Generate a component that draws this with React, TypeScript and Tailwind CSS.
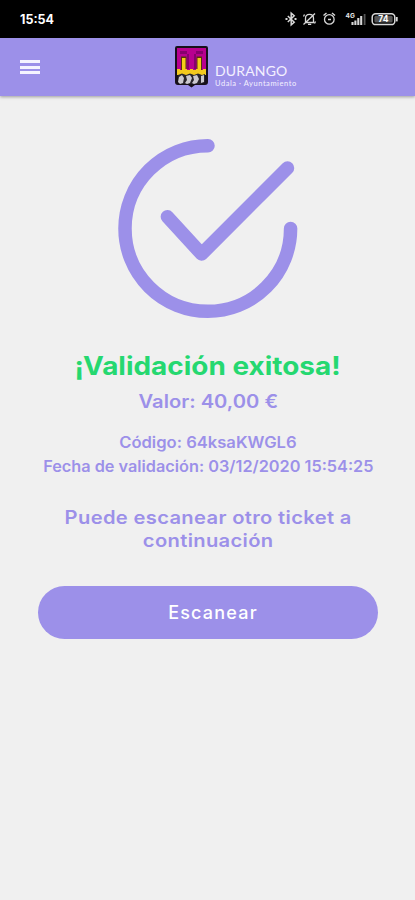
const StatusIcons = () => (
  <svg width="116" height="16" viewBox="284 11 116 16" fill="none" stroke="#d8d8d8" strokeWidth="1.300">
    {/* bluetooth */}
    <path d="M287.800 16l6.400 6.200-3 2.600V13.200l3 2.600-6.400 6.200" strokeWidth="1.500" />
    <path d="M285.500 19h2M294.500 19h2" strokeWidth="1.800" />
    {/* muted bell */}
    <path d="M305.500 22.500v-4.200c0-5.200 8-5.200 8 0v4.200zM308 24.400h3.200M303.500 24.500l11.500-11M303.500 16.500l1-2M315.500 21.500l-1 2" />
    {/* alarm */}
    <circle cx="329.300" cy="19.400" r="4.800" />
    <path d="M328 19.500h3M323.500 15.500l3-2.500M335 15.500l-3-2.500" strokeWidth="1.500" />
    {/* signal */}
    <path d="M352.500 25v-3M355.400 25v-4.500M358.300 25v-7M361.200 25v-9" strokeWidth="2.100" />
    <path d="M364.600 25V14" stroke="#555" strokeWidth="1.800" />
    <text x="345.500" y="17.800" fill="#e4e4e4" stroke="none" fontSize="6.500" fontWeight="700" fontFamily="Inter, sans-serif">4G</text>
    {/* battery */}
    <rect x="372.200" y="13.800" width="22.600" height="10.800" rx="3.400" strokeWidth="1.500" />
    <path d="M396.800 17v4.400" strokeWidth="1.800" />
    <rect x="374.400" y="15.800" width="18.200" height="6.800" rx="1.500" fill="#555" stroke="none" />
    <text x="383.400" y="22.400" fill="#fff" stroke="none" fontSize="8.500" fontWeight="700" textAnchor="middle" fontFamily="Inter, sans-serif">74</text>
  </svg>
);

const Crest = () => (
  <svg width="33" height="42" viewBox="0 0 33 42">
    <path d="M0 2q0-2 2-2h29q2 0 2 2v34q0 3-3 3H20l-3.500 2.500L13 39H3q-3 0-3-3z" fill="#17101a" />
    <path d="M2 2h29v22H2z" fill="#b8008f" />
    <path d="M5 5h7v3H5zM21 5h7v3h-7z" fill="#86006d" />
    <path d="M12 8h2v15h-2zM19 8h2v15h-2z" fill="#86006d" />
    <path d="M6 10.500h5.500V24H6zM21.500 10.500H27V24h-5.500z" fill="#5a3010" />
    <path d="M7 12h3.500v12H7zM22.500 12H26v12h-3.500z" fill="#f4cc18" />
    <path d="M2 23h3v1h3v-1h4v1h3v-1h3v1h3v-1h4v1h3v-1h3v6H2z" fill="#f4c91c" />
    <path d="M3 29l4-1.500 4 1.500 4-1.500 4 1.500 4-1.500 4 1.500 3-1v8l-4 2H7l-4-2z" fill="#28242a" />
    <path d="M4 31l3-2 2 3-1 5-3 1-2-2zM11 30l4-1 2 3-2 5-3 1-2-1 2-3zM18 30l4-1 2 4-2 4-3 1-2-1 2-3zM26 30l3-1v7l-3 1z" fill="#cbc8cf" />
  </svg>
);

const CheckMark = () => (
  <svg width="182" height="182" viewBox="117 138 182 182" fill="none" stroke="#9c90e9" strokeWidth="13.500" strokeLinecap="round" strokeLinejoin="round">
    <path d="M208 145.700A82.800 82.800 0 1 0 290.600 228.500" />
    <path d="M167.400 216.800L201.600 254L287.500 168" />
  </svg>
);

const App = () => {
  return (
    <div className="flex h-[900px] w-[415px] flex-col overflow-hidden bg-[#f0f0f0] font-['Inter',sans-serif] text-[#9c90e9]">
      <div className="flex h-[38px] shrink-0 items-center justify-between bg-black pl-5 pr-[15px] text-white">
        <span className="pt-[2px] text-[12.5px] font-bold">15:54</span>
        <StatusIcons />
      </div>

      <header className="flex h-[58px] shrink-0 items-start bg-[#9c90e9] pl-5 shadow-[0_1px_3px_rgba(0,0,0,0.35)]">
        <div className="mt-[22px] flex w-5 flex-col gap-[2.5px]">
          <span className="h-[3px] bg-[#f5f3ff]" />
          <span className="h-[3px] bg-[#f5f3ff]" />
          <span className="h-[3px] bg-[#f5f3ff]" />
        </div>
        <div className="ml-[135px] mt-2 flex gap-[7px]">
          <Crest />
          <div className="pt-[18px] font-['Lato',sans-serif] whitespace-nowrap text-[#f4f1ff]">
            <p className="text-[14px] leading-[14px] tracking-[0.15px]">DURANGO</p>
            <p className="text-[7.5px] leading-[11px] tracking-[0.55px]">Udala · Ayuntamiento</p>
          </div>
        </div>
      </header>

      <main className="flex flex-col items-center pl-px pt-[42px] text-center font-semibold whitespace-nowrap">
        <CheckMark />
        <h1 className="mt-[28px] scale-x-[1.095] text-[25.5px] leading-9 font-bold text-[#25d870]">¡Validación exitosa!</h1>
        <p className="mt-1 scale-x-[1.12] text-[18px] leading-7">Valor: 40,00 €</p>
        <p className="mt-[15px] scale-x-[1.07] text-[15.5px] leading-6">Código: 64ksaKWGL6</p>
        <p className="scale-x-[1.05] text-[15.5px] leading-6">Fecha de validación: 03/12/2020 15:54:25</p>
        <p className="mt-[27px] scale-x-[1.12] text-[18px] leading-[23px] tracking-[0.3px]">
          Puede escanear otro ticket a
          <br />
          continuación
        </p>
        <button className="mt-[34px] h-[53px] w-[340px] rounded-full bg-[#9c90e9] pl-[10px] text-[18px] font-medium tracking-[1.2px] text-white">
          Escanear
        </button>
      </main>
    </div>
  );
};

export default App;
